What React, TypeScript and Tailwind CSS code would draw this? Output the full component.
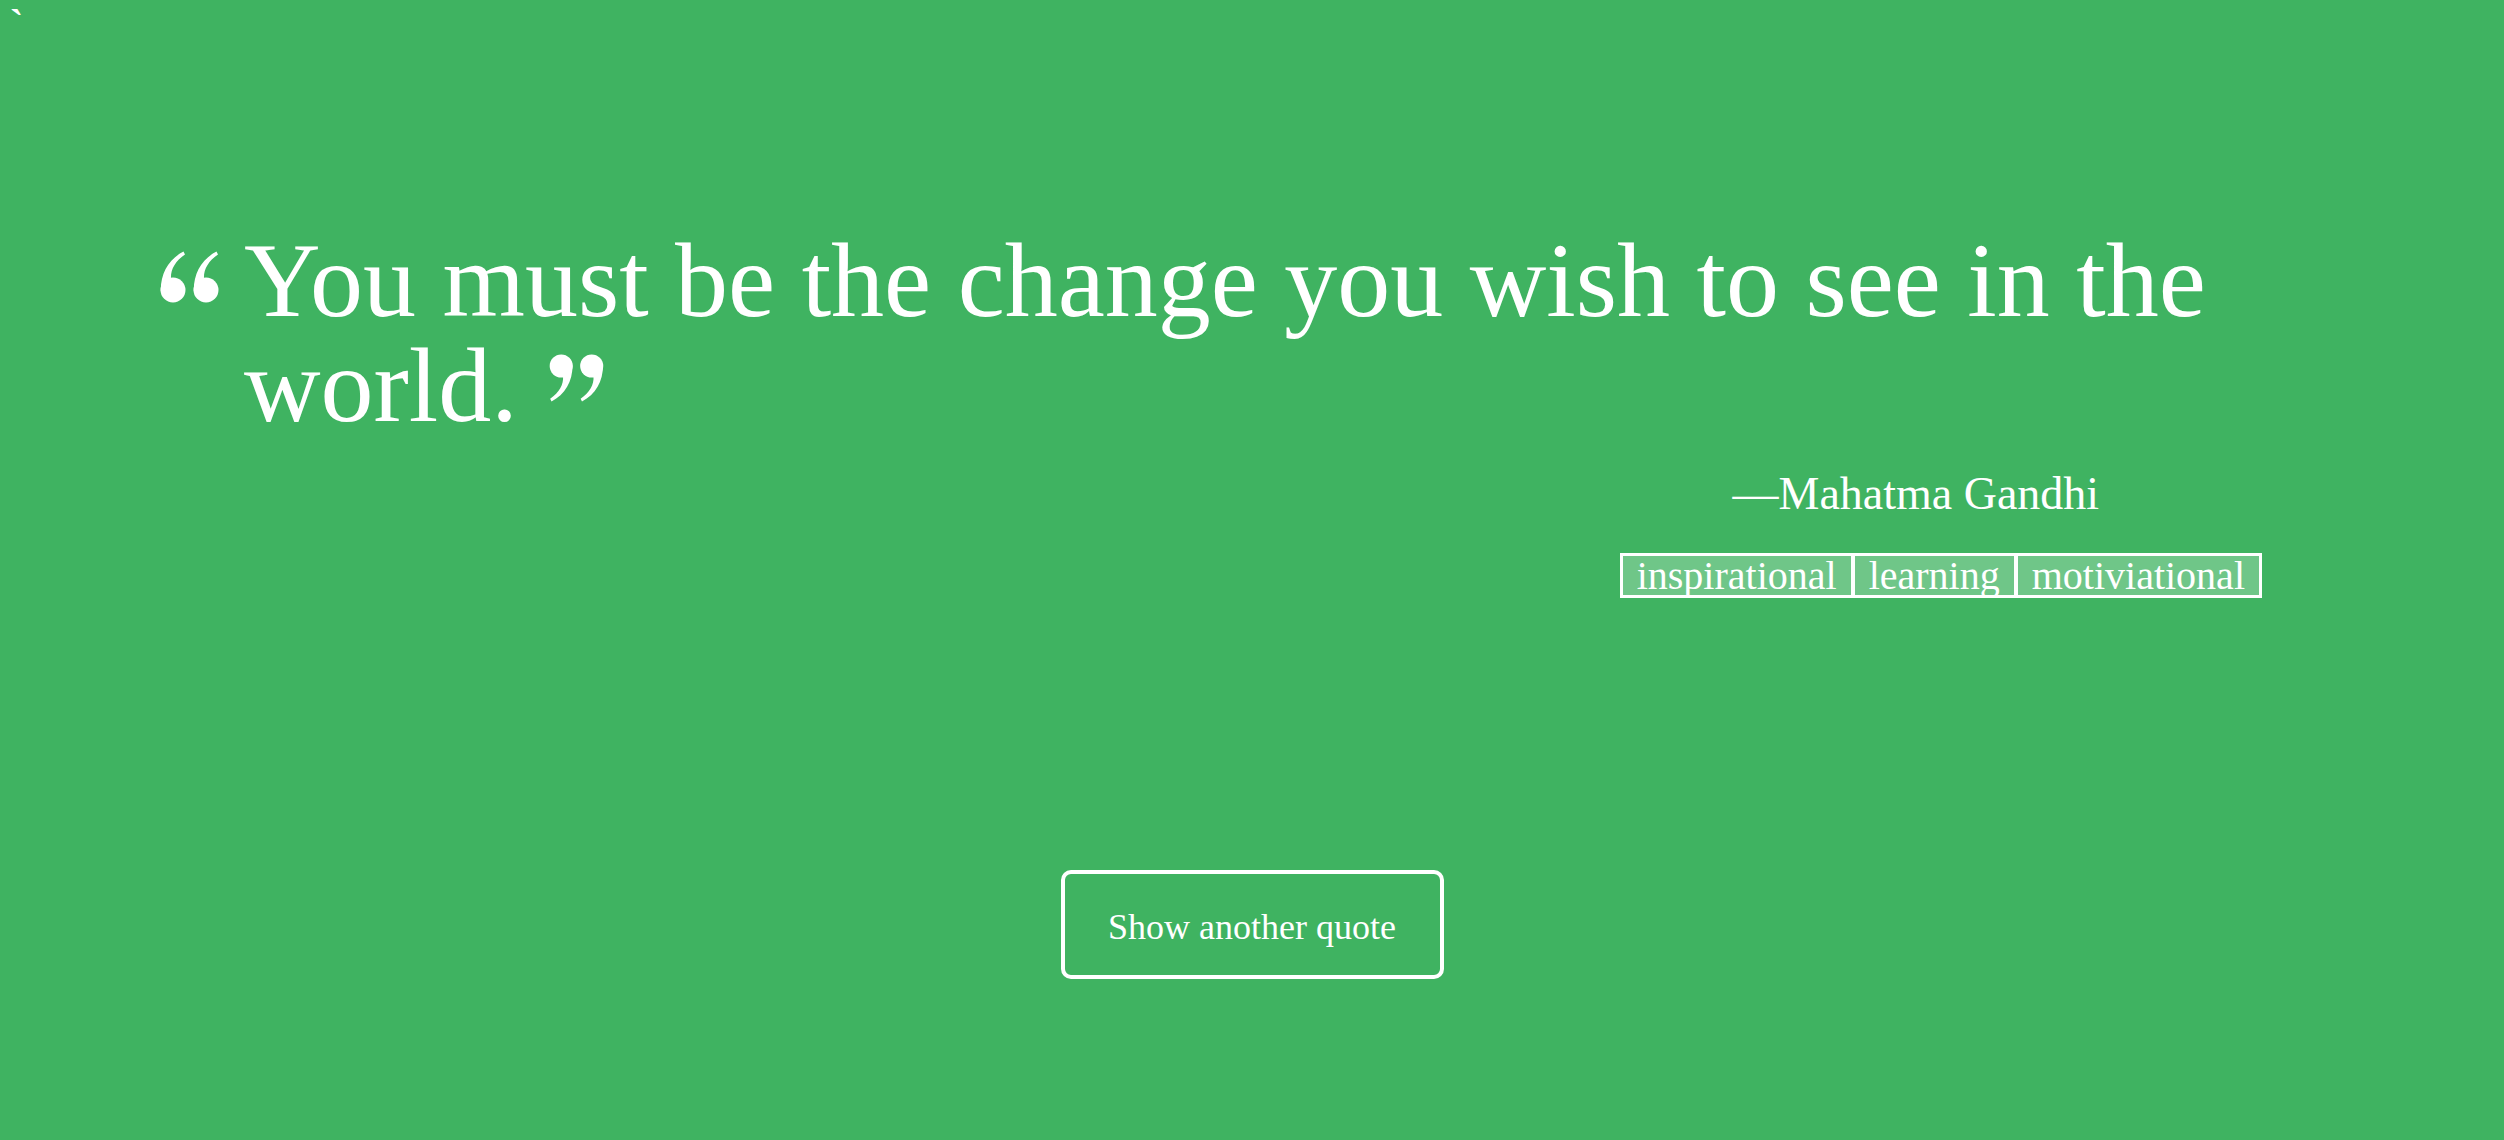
import { useState } from "react";

const quotes = [
  {
    text: "You must be the change you wish to see in the world.",
    author: "Mahatma Gandhi",
    tags: ["inspirational", "learning", "motiviational"],
  },
];

function OpenQuote() {
  return (
    <svg viewBox="0 0 60 52" className="mt-[23px] h-[52px] w-[60px] shrink-0" fill="white">
      <path d="M0.8 40 C0.5 22 9 8 23.5 0.5 L25 3.5 C15 10 10.5 19 11 27.5 Z" />
      <circle cx="13" cy="39" r="12.5" />
      <path d="M33.8 40 C33.5 22 42 8 56.5 0.5 L58 3.5 C48 10 43.5 19 44 27.5 Z" />
      <circle cx="46" cy="39" r="12.5" />
    </svg>
  );
}

function CloseQuote() {
  return (
    <svg viewBox="0 0 60 52" className="ml-[2px] inline-block h-[48px] w-[60px] align-[19px]" fill="white">
      <g transform="rotate(180 30 26)">
        <path d="M0.8 40 C0.5 22 9 8 23.5 0.5 L25 3.5 C15 10 10.5 19 11 27.5 Z" />
        <circle cx="13" cy="39" r="12.5" />
        <path d="M33.8 40 C33.5 22 42 8 56.5 0.5 L58 3.5 C48 10 43.5 19 44 27.5 Z" />
        <circle cx="46" cy="39" r="12.5" />
      </g>
    </svg>
  );
}

export default function App() {
  const [idx, setIdx] = useState(0);
  const q = quotes[idx];

  return (
    <div className="flex min-h-screen flex-col bg-[#3fb361] font-['Liberation_Serif',serif] text-white">
      {/* stray char in the original markup */}
      <div className="h-[44px] pl-[10px] pt-1 text-[40px] font-bold leading-none">`</div>

      {/* QUOTE */}
      <div className="mt-[184px] flex items-start gap-6 pl-[160px] pr-[243px]">
        <OpenQuote />
        <p className="text-[106px] leading-[105px]">
          {q.text} <CloseQuote />
        </p>
      </div>

      {/* AUTHOR + TAGS */}
      <div className="flex justify-end pr-[242px]">
        <div className="flex flex-col items-center">
          <div className="mt-[28px] pr-[50px] text-[46px] leading-[55px]">—{q.author}</div>
          <div className="mt-[32px] flex border border-white">
            {q.tags.map((t) => (
              <span key={t} className="border-2 border-white bg-white/25 px-[14px] text-[40px] leading-[39px]">
                {t}
              </span>
            ))}
          </div>
        </div>
      </div>

      {/* BUTTON */}
      <div className="mt-[272px] flex justify-center">
        <button
          onClick={() => setIdx((idx + 1) % quotes.length)}
          className="flex h-[109px] w-[383px] items-center justify-center rounded-[10px] border-4 border-white pt-1 text-[36px]"
        >
          Show another quote
        </button>
      </div>
    </div>
  );
}
